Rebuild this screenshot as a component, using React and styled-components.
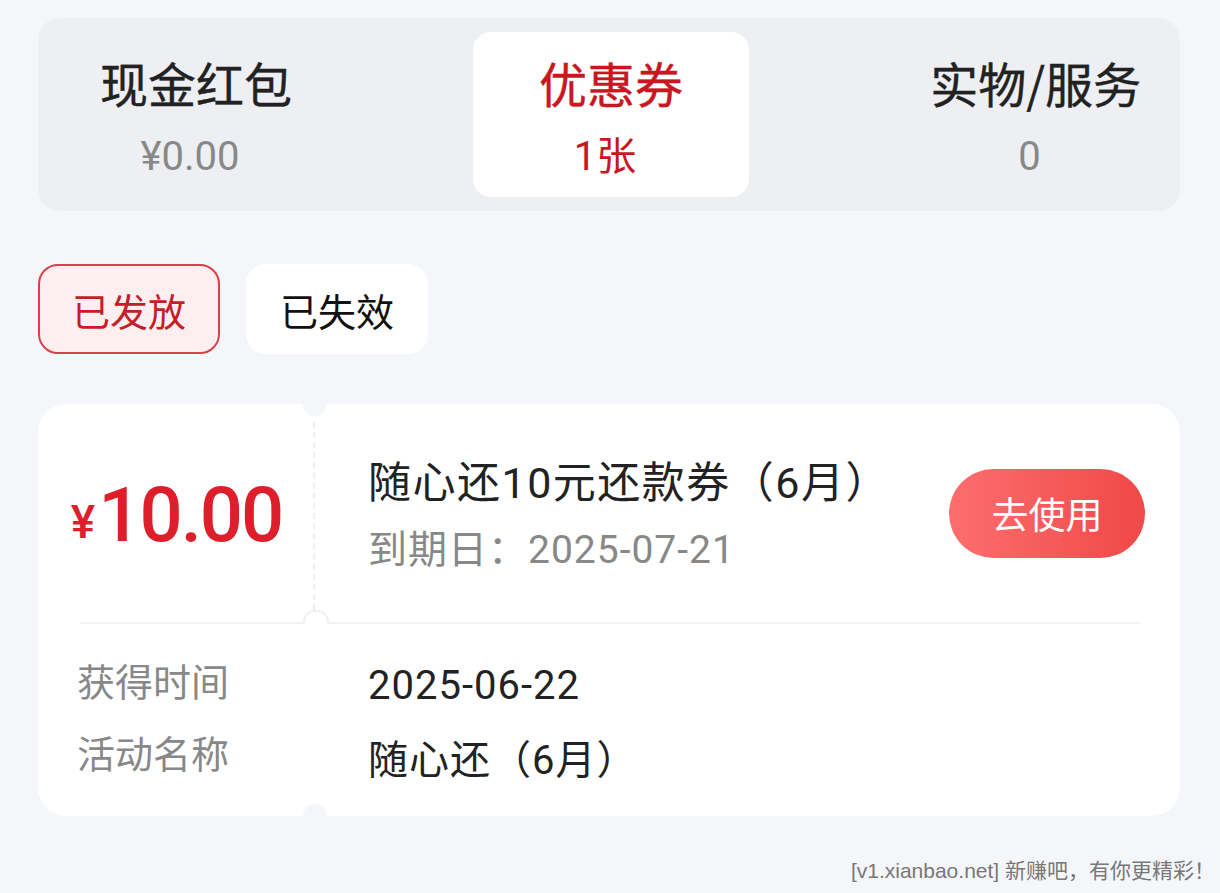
import React from "react";
import styled, { createGlobalStyle } from "styled-components";

const GlobalStyle = createGlobalStyle`
  body {
    margin: 0;
    background: #f5f6fa;
    font-family: Roboto, "Noto Sans CJK SC", sans-serif;
  }
`;

const Page = styled.div`
  width: 1220px;
  min-height: 893px;
  box-sizing: border-box;
  padding: 18px 40px 0 38px;
  background: #f5f6fa;
`;

const Segment = styled.div`
  height: 193px;
  box-sizing: border-box;
  padding: 14px 39px 14px 62px;
  background: #eeeff3;
  border-radius: 22px;
  display: flex;
  justify-content: space-between;
  align-items: stretch;
`;

const Tab = styled.div`
  display: flex;
  flex-direction: column;
  align-items: center;
  justify-content: center;
  padding: 9px ${(p) => (p.$active ? "66px" : "0")} 0;
  background: ${(p) => (p.$active ? "#fff" : "transparent")};
  border-radius: 18px;
  color: ${(p) => (p.$active ? "#c9161f" : "#222")};
`;

const TabTitle = styled.div`
  font-family: "Noto Sans CJK SC", sans-serif;
  font-size: 48px;
  line-height: 58px;
  font-weight: 400;
  -webkit-text-stroke: 0.4px currentColor;
`;

const TabValue = styled.div`
  font-size: 40px;
  line-height: 56px;
  margin-top: 18px;
  margin-right: 12px;
  color: ${(p) => (p.$active ? "#c9161f" : "#888")};
`;

const Chips = styled.div`
  display: flex;
  gap: 26px;
  margin-top: 53px;
`;

const Chip = styled.div`
  width: 182px;
  height: 90px;
  box-sizing: border-box;
  border-radius: 20px;
  display: flex;
  align-items: center;
  justify-content: center;
  font-family: "Noto Sans CJK SC", sans-serif;
  font-size: 38px;
  border: 2px solid ${(p) => (p.$active ? "#d9404a" : "#fff")};
  background: ${(p) => (p.$active ? "#fdeff0" : "#fff")};
  color: ${(p) => (p.$active ? "#c41e28" : "#111")};
`;

const Card = styled.div`
  position: relative;
  margin-top: 50px;
  background: #fff;
  border-radius: 28px;
  height: 412px;
  display: flex;
  flex-direction: column;
`;

const Top = styled.div`
  height: 218px;
  display: flex;
  align-items: center;
`;

const PriceCol = styled.div`
  position: relative;
  width: 277px;
  height: 100%;
  display: flex;
  align-items: center;
  justify-content: center;
  color: #de1f2b;
  padding-top: 4px;
  box-sizing: border-box;

  &::after {
    content: "";
    position: absolute;
    right: 0;
    top: 18px;
    bottom: 12px;
    border-right: 2px dashed #efefef;
  }
`;

const Yen = styled.span`
  font-size: 46px;
  font-weight: 500;
  margin-right: 3px;
  padding-top: 14px;
`;

const Amount = styled.span`
  font-size: 76px;
  font-weight: 500;
  letter-spacing: -2px;
`;

const Info = styled.div`
  flex: 1;
  padding-left: 53px;
  display: flex;
  flex-direction: column;
  padding-top: 6px;
`;

const CouponName = styled.div`
  font-size: 43px;
  line-height: 58px;
  letter-spacing: 1.5px;
  color: #222;
`;

const Expire = styled.div`
  font-size: 39px;
  line-height: 56px;
  letter-spacing: 1px;
  margin-top: 10px;
  color: #888;
`;

const UseButton = styled.button`
  width: 196px;
  height: 89px;
  margin-right: 35px;
  border: none;
  border-radius: 45px;
  background: linear-gradient(90deg, #fd6e6e, #f04848);
  color: #fff;
  font-family: "Noto Sans CJK SC", sans-serif;
  font-size: 37px;
  cursor: pointer;
`;

const Divider = styled.div`
  position: relative;
  height: 2px;
  background: #f3f3f3;
  margin: 0 40px 0 42px;
`;

const Bump = styled.div`
  position: absolute;
  left: 223px;
  top: -12px;
  width: 22px;
  height: 12px;
  border: 2px solid #f0f0f0;
  border-bottom: none;
  border-radius: 12px 12px 0 0;
  background: #fff;
`;

const Notch = styled.div`
  position: absolute;
  left: 265px;
  width: 24px;
  height: 24px;
  border-radius: 50%;
  background: #f5f6fa;
  ${(p) => (p.$bottom ? "bottom: -12px;" : "top: -12px;")}
`;

const Details = styled.div`
  padding: 19px 0 0 39px;
  display: grid;
  grid-template-columns: 291px 1fr;
  grid-auto-rows: 72px;
  align-items: center;
  font-size: 38px;
`;

const Label = styled.div`
  font-family: "Noto Sans CJK SC", sans-serif;
  color: #888;
`;

const Value = styled.div`
  color: #222;
  font-size: 40px;
  letter-spacing: 1px;
  padding-top: 12px;
`;

const Footer = styled.div`
  margin-top: 38px;
  margin-right: -35px;
  text-align: right;
  font-family: "Liberation Sans", "Noto Sans CJK SC", sans-serif;
  font-size: 21px;
  color: #777;
`;

const tabs = [
  { title: "现金红包", value: "¥0.00" },
  { title: "优惠券", value: "1张", active: true },
  { title: "实物/服务", value: "0" },
];

const details = [
  ["获得时间", "2025-06-22"],
  ["活动名称", "随心还（6月）"],
];

export default function App() {
  return (
    <Page>
      <GlobalStyle />
      <Segment>
        {tabs.map((t) => (
          <Tab key={t.title} $active={t.active}>
            <TabTitle>{t.title}</TabTitle>
            <TabValue $active={t.active}>{t.value}</TabValue>
          </Tab>
        ))}
      </Segment>

      <Chips>
        <Chip $active>已发放</Chip>
        <Chip>已失效</Chip>
      </Chips>

      <Card>
        <Notch />
        <Notch $bottom />
        <Top>
          <PriceCol>
            <Yen>¥</Yen>
            <Amount>10.00</Amount>
          </PriceCol>
          <Info>
            <CouponName>随心还10元还款券（6月）</CouponName>
            <Expire>到期日：2025-07-21</Expire>
          </Info>
          <UseButton>去使用</UseButton>
        </Top>
        <Divider>
          <Bump />
        </Divider>
        <Details>
          {details.map(([k, v]) => (
            <React.Fragment key={k}>
              <Label>{k}</Label>
              <Value>{v}</Value>
            </React.Fragment>
          ))}
        </Details>
      </Card>

      <Footer>[v1.xianbao.net] 新赚吧，有你更精彩！</Footer>
    </Page>
  );
}
